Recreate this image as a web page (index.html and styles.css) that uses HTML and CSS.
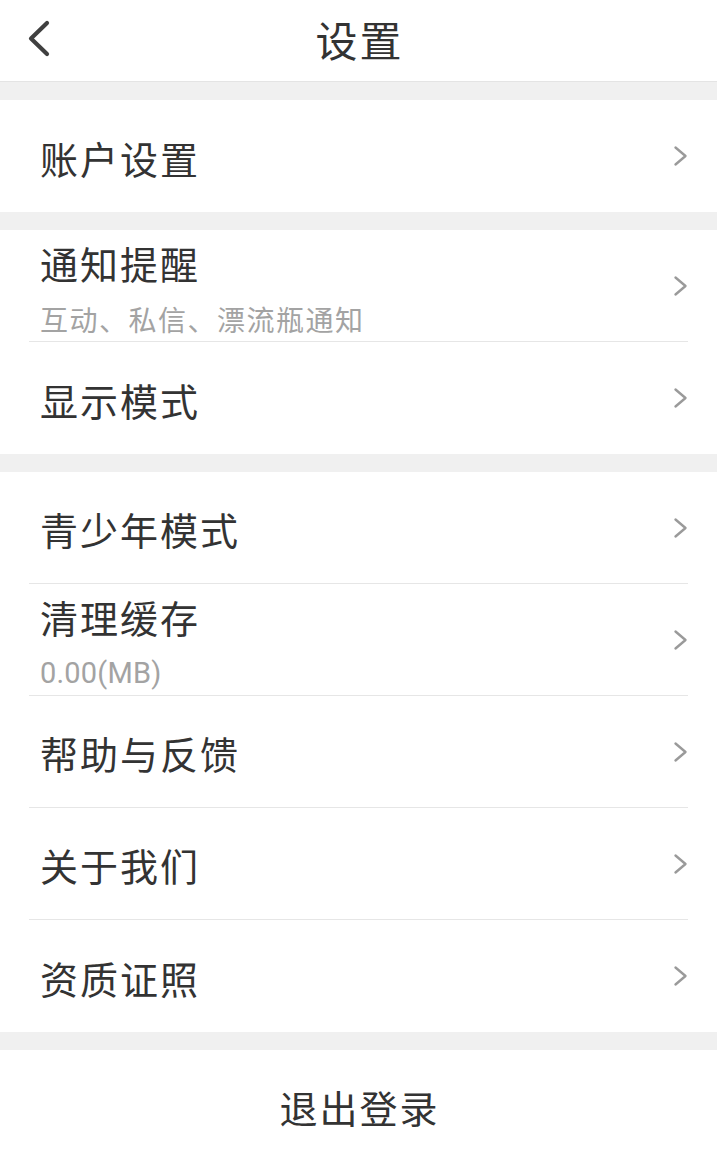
FILE: index.html
```html
<!DOCTYPE html>
<html lang="zh-CN">
<head>
<meta charset="utf-8">
<title>设置</title>
<link rel="stylesheet" href="styles.css">
</head>
<body>
<div class="page">
  <header class="topbar">
    <div class="topbar-left">
      <svg class="back-icon" width="26" height="42" viewBox="0 0 26 42" aria-hidden="true">
        <polyline points="21,5 5,20.5 21,36" fill="none" stroke="#404040" stroke-width="4.2" stroke-linecap="round" stroke-linejoin="round"/>
      </svg>
    </div>
    <h1 class="title">设置</h1>
    <div class="topbar-right"></div>
  </header>

  <div class="gap"></div>

  <section class="group">
    <div class="item">
      <div class="item-text"><div class="item-title">账户设置</div></div>
      <svg class="chev" width="15" height="22" viewBox="0 0 15 22" aria-hidden="true"><polyline points="2.5,2.5 12.5,11 2.5,19.5" fill="none" stroke="#9a9a9a" stroke-width="2.4" stroke-linecap="round" stroke-linejoin="round"/></svg>
    </div>
  </section>

  <div class="gap"></div>

  <section class="group">
    <div class="item">
      <div class="item-text two-line">
        <div class="item-title">通知提醒</div>
        <div class="item-sub">互动、私信、漂流瓶通知</div>
      </div>
      <svg class="chev" width="15" height="22" viewBox="0 0 15 22" aria-hidden="true"><polyline points="2.5,2.5 12.5,11 2.5,19.5" fill="none" stroke="#9a9a9a" stroke-width="2.4" stroke-linecap="round" stroke-linejoin="round"/></svg>
    </div>
    <div class="item">
      <div class="item-text"><div class="item-title">显示模式</div></div>
      <svg class="chev" width="15" height="22" viewBox="0 0 15 22" aria-hidden="true"><polyline points="2.5,2.5 12.5,11 2.5,19.5" fill="none" stroke="#9a9a9a" stroke-width="2.4" stroke-linecap="round" stroke-linejoin="round"/></svg>
    </div>
  </section>

  <div class="gap"></div>

  <section class="group">
    <div class="item">
      <div class="item-text"><div class="item-title">青少年模式</div></div>
      <svg class="chev" width="15" height="22" viewBox="0 0 15 22" aria-hidden="true"><polyline points="2.5,2.5 12.5,11 2.5,19.5" fill="none" stroke="#9a9a9a" stroke-width="2.4" stroke-linecap="round" stroke-linejoin="round"/></svg>
    </div>
    <div class="item">
      <div class="item-text two-line">
        <div class="item-title">清理缓存</div>
        <div class="item-sub num">0.00(MB)</div>
      </div>
      <svg class="chev" width="15" height="22" viewBox="0 0 15 22" aria-hidden="true"><polyline points="2.5,2.5 12.5,11 2.5,19.5" fill="none" stroke="#9a9a9a" stroke-width="2.4" stroke-linecap="round" stroke-linejoin="round"/></svg>
    </div>
    <div class="item">
      <div class="item-text"><div class="item-title">帮助与反馈</div></div>
      <svg class="chev" width="15" height="22" viewBox="0 0 15 22" aria-hidden="true"><polyline points="2.5,2.5 12.5,11 2.5,19.5" fill="none" stroke="#9a9a9a" stroke-width="2.4" stroke-linecap="round" stroke-linejoin="round"/></svg>
    </div>
    <div class="item">
      <div class="item-text"><div class="item-title">关于我们</div></div>
      <svg class="chev" width="15" height="22" viewBox="0 0 15 22" aria-hidden="true"><polyline points="2.5,2.5 12.5,11 2.5,19.5" fill="none" stroke="#9a9a9a" stroke-width="2.4" stroke-linecap="round" stroke-linejoin="round"/></svg>
    </div>
    <div class="item">
      <div class="item-text"><div class="item-title">资质证照</div></div>
      <svg class="chev" width="15" height="22" viewBox="0 0 15 22" aria-hidden="true"><polyline points="2.5,2.5 12.5,11 2.5,19.5" fill="none" stroke="#9a9a9a" stroke-width="2.4" stroke-linecap="round" stroke-linejoin="round"/></svg>
    </div>
  </section>

  <div class="gap"></div>

  <section class="logout">
    <span class="logout-text">退出登录</span>
  </section>
</div>
</body>
</html>
```

FILE: styles.css
```css
* {
  box-sizing: border-box;
}

html, body {
  margin: 0;
  padding: 0;
  background: #ffffff;
}

body {
  font-family: Roboto, "Noto Sans CJK SC", "Noto Sans", sans-serif;
  color: #333333;
}

.page {
  width: 717px;
  height: 1158px;
  overflow: hidden;
  display: flex;
  flex-direction: column;
  background: #ffffff;
}

.topbar {
  height: 82px;
  flex: none;
  display: grid;
  grid-template-columns: 1fr auto 1fr;
  align-items: center;
  border-bottom: 1px solid #e4e4e4;
  background: #ffffff;
}

.topbar-left {
  display: flex;
  align-items: center;
  padding-left: 26px;
  padding-bottom: 4px;
}

.back-icon {
  display: block;
}

.title {
  margin: 0;
  font-family: "Noto Sans CJK SC", sans-serif;
  font-weight: 400;
  font-size: 42px;
  letter-spacing: 2px;
  line-height: 50px;
  color: #333333;
  padding-bottom: 4px;
  padding-left: 2px;
}

.gap {
  height: 18px;
  flex: none;
  background: #f0f0f0;
}

.group {
  padding: 0 29px;
  background: #ffffff;
}

.item {
  height: 112px;
  display: flex;
  align-items: center;
  justify-content: space-between;
  padding-left: 11px;
  border-bottom: 1px solid #e6e6e6;
}

.item:last-child {
  border-bottom: none;
}

.item-text {
  display: flex;
  flex-direction: column;
  padding-top: 3px;
}

.item-text.two-line {
  margin-top: 10px;
  padding-top: 0;
  gap: 16px;
}

.item-title {
  font-family: "Noto Sans CJK SC", sans-serif;
  font-size: 38px;
  letter-spacing: 2px;
  line-height: 40px;
  color: #333333;
}

.item-sub {
  font-family: "Noto Sans CJK SC", sans-serif;
  font-size: 28px;
  letter-spacing: 1.5px;
  line-height: 40px;
  color: #a3a3a3;
}

.item-sub.num {
  font-family: Roboto, "Noto Sans CJK SC", sans-serif;
  font-size: 29px;
  letter-spacing: 0.2px;
}

.chev {
  display: block;
  flex: none;
}

.logout {
  flex: 1;
  display: flex;
  align-items: center;
  justify-content: center;
  padding-top: 6px;
  background: #ffffff;
}

.logout-text {
  font-family: "Noto Sans CJK SC", sans-serif;
  font-size: 38px;
  letter-spacing: 2px;
  line-height: 40px;
  color: #333333;
  padding-left: 2px;
}
```
